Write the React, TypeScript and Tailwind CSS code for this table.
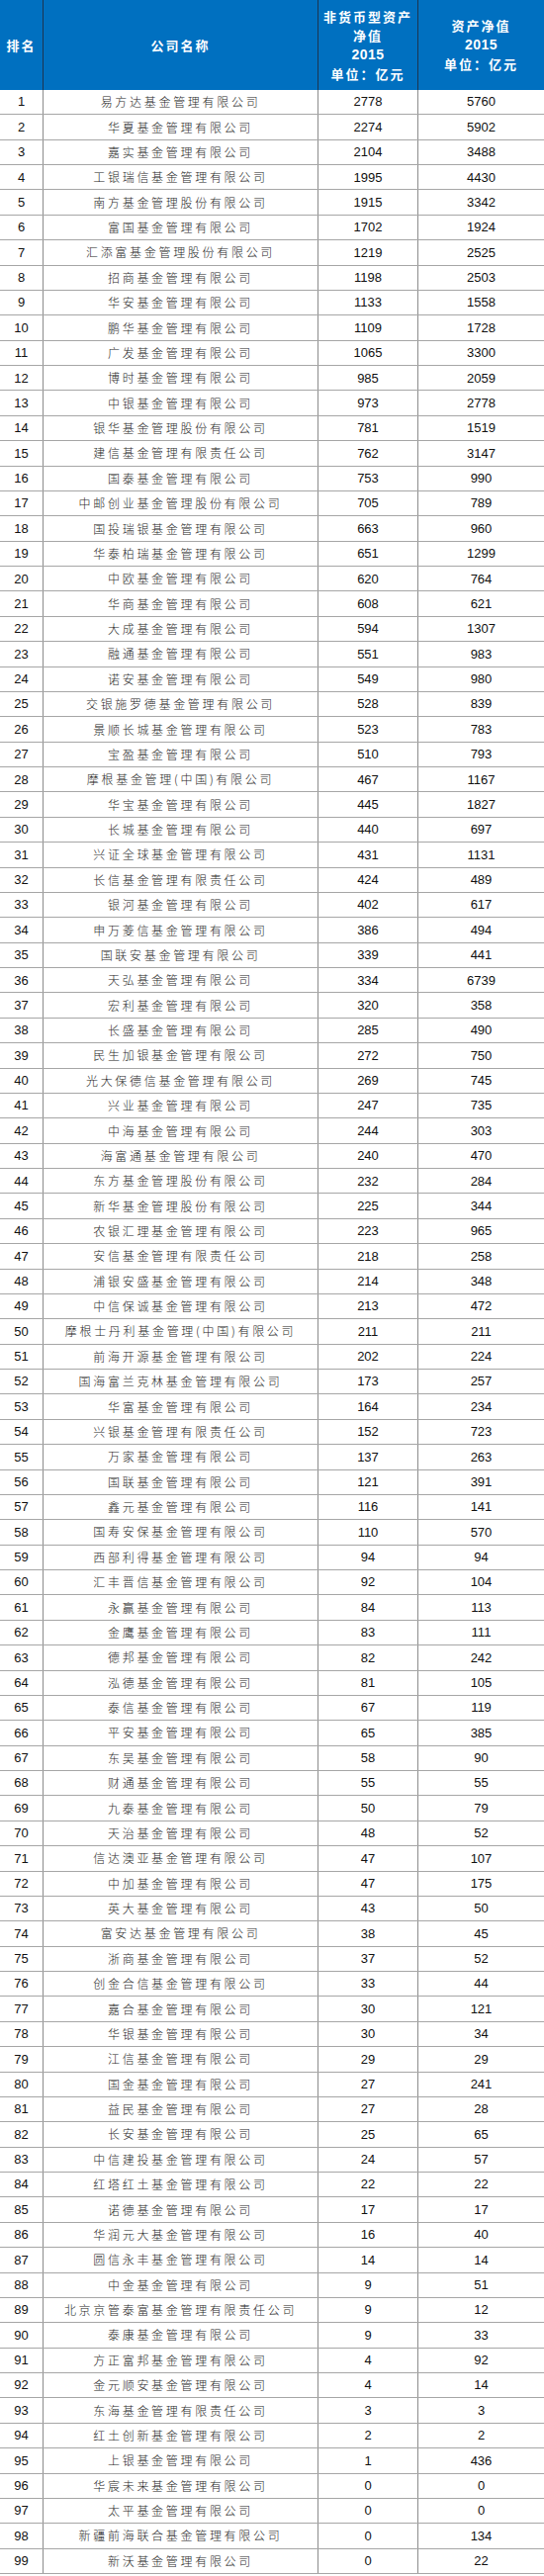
const rows: [string, string, string][] = [
  ["易方达基金管理有限公司", "2778", "5760"],
  ["华夏基金管理有限公司", "2274", "5902"],
  ["嘉实基金管理有限公司", "2104", "3488"],
  ["工银瑞信基金管理有限公司", "1995", "4430"],
  ["南方基金管理股份有限公司", "1915", "3342"],
  ["富国基金管理有限公司", "1702", "1924"],
  ["汇添富基金管理股份有限公司", "1219", "2525"],
  ["招商基金管理有限公司", "1198", "2503"],
  ["华安基金管理有限公司", "1133", "1558"],
  ["鹏华基金管理有限公司", "1109", "1728"],
  ["广发基金管理有限公司", "1065", "3300"],
  ["博时基金管理有限公司", "985", "2059"],
  ["中银基金管理有限公司", "973", "2778"],
  ["银华基金管理股份有限公司", "781", "1519"],
  ["建信基金管理有限责任公司", "762", "3147"],
  ["国泰基金管理有限公司", "753", "990"],
  ["中邮创业基金管理股份有限公司", "705", "789"],
  ["国投瑞银基金管理有限公司", "663", "960"],
  ["华泰柏瑞基金管理有限公司", "651", "1299"],
  ["中欧基金管理有限公司", "620", "764"],
  ["华商基金管理有限公司", "608", "621"],
  ["大成基金管理有限公司", "594", "1307"],
  ["融通基金管理有限公司", "551", "983"],
  ["诺安基金管理有限公司", "549", "980"],
  ["交银施罗德基金管理有限公司", "528", "839"],
  ["景顺长城基金管理有限公司", "523", "783"],
  ["宝盈基金管理有限公司", "510", "793"],
  ["摩根基金管理(中国)有限公司", "467", "1167"],
  ["华宝基金管理有限公司", "445", "1827"],
  ["长城基金管理有限公司", "440", "697"],
  ["兴证全球基金管理有限公司", "431", "1131"],
  ["长信基金管理有限责任公司", "424", "489"],
  ["银河基金管理有限公司", "402", "617"],
  ["申万菱信基金管理有限公司", "386", "494"],
  ["国联安基金管理有限公司", "339", "441"],
  ["天弘基金管理有限公司", "334", "6739"],
  ["宏利基金管理有限公司", "320", "358"],
  ["长盛基金管理有限公司", "285", "490"],
  ["民生加银基金管理有限公司", "272", "750"],
  ["光大保德信基金管理有限公司", "269", "745"],
  ["兴业基金管理有限公司", "247", "735"],
  ["中海基金管理有限公司", "244", "303"],
  ["海富通基金管理有限公司", "240", "470"],
  ["东方基金管理股份有限公司", "232", "284"],
  ["新华基金管理股份有限公司", "225", "344"],
  ["农银汇理基金管理有限公司", "223", "965"],
  ["安信基金管理有限责任公司", "218", "258"],
  ["浦银安盛基金管理有限公司", "214", "348"],
  ["中信保诚基金管理有限公司", "213", "472"],
  ["摩根士丹利基金管理(中国)有限公司", "211", "211"],
  ["前海开源基金管理有限公司", "202", "224"],
  ["国海富兰克林基金管理有限公司", "173", "257"],
  ["华富基金管理有限公司", "164", "234"],
  ["兴银基金管理有限责任公司", "152", "723"],
  ["万家基金管理有限公司", "137", "263"],
  ["国联基金管理有限公司", "121", "391"],
  ["鑫元基金管理有限公司", "116", "141"],
  ["国寿安保基金管理有限公司", "110", "570"],
  ["西部利得基金管理有限公司", "94", "94"],
  ["汇丰晋信基金管理有限公司", "92", "104"],
  ["永赢基金管理有限公司", "84", "113"],
  ["金鹰基金管理有限公司", "83", "111"],
  ["德邦基金管理有限公司", "82", "242"],
  ["泓德基金管理有限公司", "81", "105"],
  ["泰信基金管理有限公司", "67", "119"],
  ["平安基金管理有限公司", "65", "385"],
  ["东吴基金管理有限公司", "58", "90"],
  ["财通基金管理有限公司", "55", "55"],
  ["九泰基金管理有限公司", "50", "79"],
  ["天治基金管理有限公司", "48", "52"],
  ["信达澳亚基金管理有限公司", "47", "107"],
  ["中加基金管理有限公司", "47", "175"],
  ["英大基金管理有限公司", "43", "50"],
  ["富安达基金管理有限公司", "38", "45"],
  ["浙商基金管理有限公司", "37", "52"],
  ["创金合信基金管理有限公司", "33", "44"],
  ["嘉合基金管理有限公司", "30", "121"],
  ["华银基金管理有限公司", "30", "34"],
  ["江信基金管理有限公司", "29", "29"],
  ["国金基金管理有限公司", "27", "241"],
  ["益民基金管理有限公司", "27", "28"],
  ["长安基金管理有限公司", "25", "65"],
  ["中信建投基金管理有限公司", "24", "57"],
  ["红塔红土基金管理有限公司", "22", "22"],
  ["诺德基金管理有限公司", "17", "17"],
  ["华润元大基金管理有限公司", "16", "40"],
  ["圆信永丰基金管理有限公司", "14", "14"],
  ["中金基金管理有限公司", "9", "51"],
  ["北京京管泰富基金管理有限责任公司", "9", "12"],
  ["泰康基金管理有限公司", "9", "33"],
  ["方正富邦基金管理有限公司", "4", "92"],
  ["金元顺安基金管理有限公司", "4", "14"],
  ["东海基金管理有限责任公司", "3", "3"],
  ["红土创新基金管理有限公司", "2", "2"],
  ["上银基金管理有限公司", "1", "436"],
  ["华宸未来基金管理有限公司", "0", "0"],
  ["太平基金管理有限公司", "0", "0"],
  ["新疆前海联合基金管理有限公司", "0", "134"],
  ["新沃基金管理有限公司", "0", "22"],
];

const cjk = "font-['Noto_Sans_CJK_SC',sans-serif]";
const num = "font-['Liberation_Sans','Noto_Sans_CJK_SC',sans-serif]";

export default function App() {
  return (
    <div className="w-[550px] h-[2605px] bg-white">
      {/* header */}
      <div className="grid grid-cols-[43px_278px_101px_128px] h-[91px] bg-[#0070c0] text-white font-bold">
        <div className={`flex items-center justify-center text-[13px] tracking-[2px] ${cjk}`}>排名</div>
        <div className={`flex items-center justify-center border-l border-[#1c3550] text-[13px] tracking-[2px] ${cjk}`}>
          公司名称
        </div>
        <div className={`flex flex-col items-center justify-center border-l border-[#1c3550] text-[13px] leading-[19.5px] tracking-[2px] ${cjk}`}>
          <span>非货币型资产</span>
          <span>净值</span>
          <span className={`text-[14px] tracking-[0.5px] ${num}`}>2015</span>
          <span>单位：亿元</span>
        </div>
        <div className={`flex flex-col items-center justify-center border-l border-[#1c3550] text-[13px] leading-[19.5px] tracking-[2px] ${cjk}`}>
          <span>资产净值</span>
          <span className={`text-[14px] tracking-[0.5px] ${num}`}>2015</span>
          <span>单位：亿元</span>
        </div>
      </div>

      {/* body */}
      <div className="grid grid-rows-[repeat(99,minmax(0,1fr))] h-[2512px] text-[#111]">
        {rows.map(([name, a, b], i) => (
          <div
            key={i}
            className="grid grid-cols-[43px_278px_101px_128px] border-b border-[#a6a6a6] items-center"
          >
            <div className={`text-center text-[13px] ${num}`}>{i + 1}</div>
            <div
              className={`h-full flex items-center justify-center border-l border-[#8c8c8c] text-[12px] font-light text-[#262626] tracking-[2.7px] ${cjk}`}
            >
              {name}
            </div>
            <div className={`h-full flex items-center justify-center border-l border-[#8c8c8c] text-[13px] ${num}`}>
              {a}
            </div>
            <div className={`h-full flex items-center justify-center border-l border-[#8c8c8c] text-[13px] ${num}`}>
              {b}
            </div>
          </div>
        ))}
      </div>
    </div>
  );
}
